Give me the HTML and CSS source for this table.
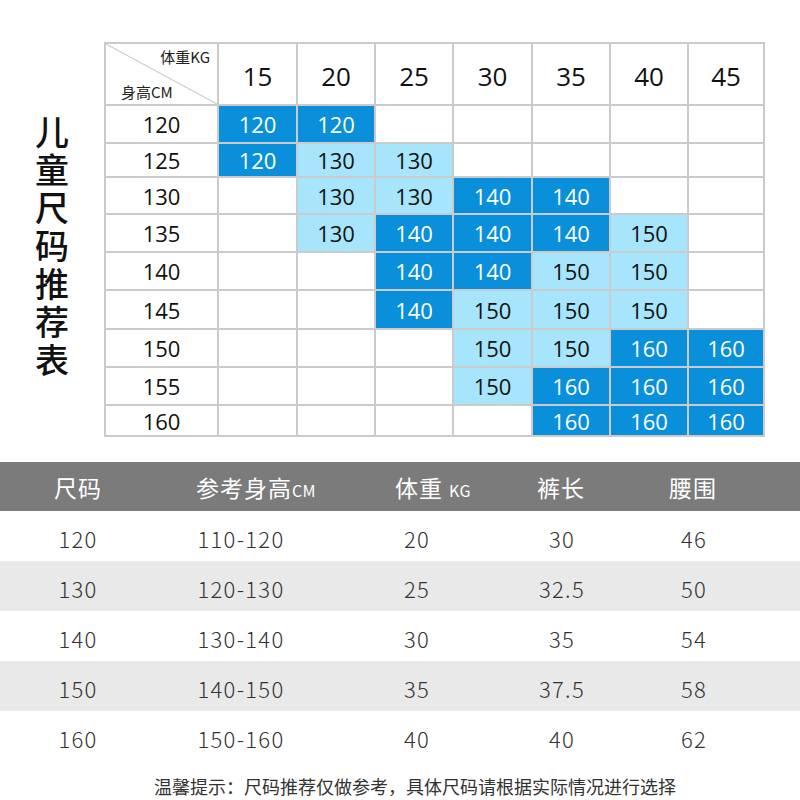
FILE: index.html
```html
<!DOCTYPE html>
<html lang="zh">
<head>
<meta charset="utf-8">
<title>儿童尺码推荐表</title>
<link rel="stylesheet" href="styles.css">
</head>
<body>
<div class="page">
  <section class="top">
    <div class="title-col"><h1 class="title">儿童尺码推荐表</h1></div>
    <div class="chart">
      <div class="corner"><span class="kg">体重KG</span><span class="cm">身高CM</span></div>
      <div class="ch">15</div><div class="ch">20</div><div class="ch">25</div><div class="ch">30</div><div class="ch">35</div><div class="ch">40</div><div class="ch">45</div>

      <div class="rh">120</div>
      <div class="c d">120</div><div class="c d">120</div><div class="c"></div><div class="c"></div><div class="c"></div><div class="c"></div><div class="c"></div>

      <div class="rh">125</div>
      <div class="c d">120</div><div class="c l">130</div><div class="c l">130</div><div class="c"></div><div class="c"></div><div class="c"></div><div class="c"></div>

      <div class="rh">130</div>
      <div class="c"></div><div class="c l">130</div><div class="c l">130</div><div class="c d">140</div><div class="c d">140</div><div class="c"></div><div class="c"></div>

      <div class="rh">135</div>
      <div class="c"></div><div class="c l">130</div><div class="c d">140</div><div class="c d">140</div><div class="c d">140</div><div class="c l">150</div><div class="c"></div>

      <div class="rh">140</div>
      <div class="c"></div><div class="c"></div><div class="c d">140</div><div class="c d">140</div><div class="c l">150</div><div class="c l">150</div><div class="c"></div>

      <div class="rh">145</div>
      <div class="c"></div><div class="c"></div><div class="c d">140</div><div class="c l">150</div><div class="c l">150</div><div class="c l">150</div><div class="c"></div>

      <div class="rh">150</div>
      <div class="c"></div><div class="c"></div><div class="c"></div><div class="c l">150</div><div class="c l">150</div><div class="c d">160</div><div class="c d">160</div>

      <div class="rh">155</div>
      <div class="c"></div><div class="c"></div><div class="c"></div><div class="c l">150</div><div class="c d">160</div><div class="c d">160</div><div class="c d">160</div>

      <div class="rh">160</div>
      <div class="c"></div><div class="c"></div><div class="c"></div><div class="c"></div><div class="c d">160</div><div class="c d">160</div><div class="c d">160</div>
    </div>
  </section>

  <section class="spec">
    <div class="spec-head">
      <div>尺码</div>
      <div>参考身高<small>CM</small></div>
      <div>体重 <small>KG</small></div>
      <div>裤长</div>
      <div>腰围</div>
    </div>
    <div class="spec-row"><div>120</div><div>110-120</div><div>20</div><div>30</div><div>46</div></div>
    <div class="spec-row alt"><div>130</div><div>120-130</div><div>25</div><div>32.5</div><div>50</div></div>
    <div class="spec-row"><div>140</div><div>130-140</div><div>30</div><div>35</div><div>54</div></div>
    <div class="spec-row alt"><div>150</div><div>140-150</div><div>35</div><div>37.5</div><div>58</div></div>
    <div class="spec-row"><div>160</div><div>150-160</div><div>40</div><div>40</div><div>62</div></div>
  </section>

  <p class="note">温馨提示：尺码推荐仅做参考，具体尺码请根据实际情况进行选择</p>
</div>
</body>
</html>
```

FILE: styles.css
```css
* { box-sizing: border-box; }

body {
  margin: 0;
  background: #fff;
  font-family: "Noto Sans CJK SC", "Noto Sans", sans-serif;
  color: #222;
}

.page {
  width: 800px;
  height: 800px;
  overflow: hidden;
}

.top {
  display: flex;
  padding-top: 42px;
}

.title-col {
  width: 104px;
  display: flex;
  justify-content: center;
}

.title {
  margin: 70px 0 0 0;
  width: 35px;
  font-size: 34px;
  line-height: 38px;
  font-weight: 500;
  color: #111;
  word-break: break-all;
  text-align: center;
}

.chart {
  display: grid;
  grid-template-columns: 111px 77px 76px 76px 77px 76px 76px 74px;
  grid-template-rows: 60px 36px 32px 35px 36px 36px 37px 36px 36px 29px;
  gap: 2px;
  padding: 2px;
  background: #cbcbcb;
  font-family: "Open Sans", "Noto Sans", sans-serif;
}

.chart > div {
  background: #fff;
  display: flex;
  align-items: center;
  justify-content: center;
}

.corner {
  flex-direction: column;
  background: linear-gradient(to top right, #fff calc(50% - 1px), #c6c6c6 50%, #fff calc(50% + 1px)) !important;
  align-items: stretch !important;
  justify-content: space-between !important;
  padding: 3px 7px 2px 15px;
  font-family: "Noto Sans CJK SC", sans-serif;
  font-size: 15px;
  line-height: 20px;
  color: #222;
}

.corner .kg { text-align: right; }
.corner .cm { text-align: left; }

.ch {
  font-size: 26px;
  color: #111;
  padding-top: 4px;
}

.rh {
  font-size: 22px;
  color: #111;
}

.c {
  font-size: 22px;
}

.chart > .d {
  background: #0a90da;
  color: #fff;
}

.chart > .l {
  background: #a6e5fb;
  color: #111;
}

.spec {
  margin-top: 25px;
}

.spec-head {
  display: grid;
  grid-template-columns: 156px 200px 154px 102px 162px 1fr;
  height: 49px;
  align-items: center;
  background: #7b7b7b;
  color: #fff;
  font-size: 23px;
  letter-spacing: 1px;
  font-weight: 400;
  text-align: center;
}

.spec-head small {
  font-size: 16px;
  letter-spacing: 0.5px;
}

.spec-row {
  display: grid;
  grid-template-columns: 156px 170px 182px 108px 156px 1fr;
  height: 50px;
  padding-top: 3px;
  align-items: center;
  text-align: center;
  font-size: 22px;
  letter-spacing: 1.3px;
  font-weight: 300;
  color: #333;
}

.spec-row.alt {
  background: #e9e9e9;
}

.note {
  margin: 0;
  height: 50px;
  line-height: 50px;
  text-align: center;
  font-size: 18px;
  letter-spacing: 0;
  color: #333;
  padding-left: 30px;
}
```
